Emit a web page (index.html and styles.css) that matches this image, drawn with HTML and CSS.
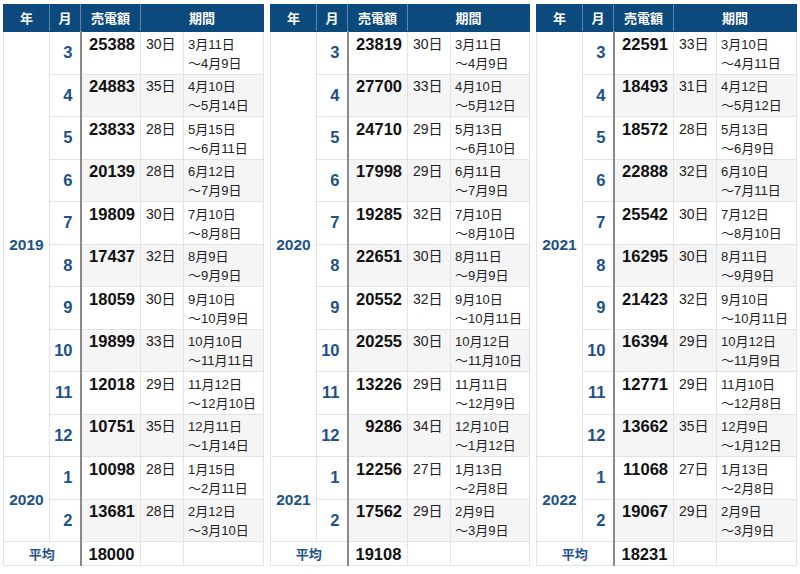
FILE: index.html
```html
<!DOCTYPE html>
<html lang="ja">
<head>
<meta charset="utf-8">
<link rel="stylesheet" href="styles.css">
</head>
<body>
<div class="wrap">
<table class="t t1">
<colgroup><col class="c-y"><col class="c-m"><col class="c-a"><col class="c-d"><col></colgroup>
<thead><tr><th>年</th><th>月</th><th>売電額</th><th colspan="2">期間</th></tr></thead>
<tbody>
<tr><td class="y" rowspan="10">2019</td><td class="m">3</td><td class="a">25388</td><td class="d">30日</td><td class="p">3月11日<br>〜4月9日</td></tr>
<tr class="g"><td class="m">4</td><td class="a">24883</td><td class="d">35日</td><td class="p">4月10日<br>〜5月14日</td></tr>
<tr><td class="m">5</td><td class="a">23833</td><td class="d">28日</td><td class="p">5月15日<br>〜6月11日</td></tr>
<tr class="g"><td class="m">6</td><td class="a">20139</td><td class="d">28日</td><td class="p">6月12日<br>〜7月9日</td></tr>
<tr><td class="m">7</td><td class="a">19809</td><td class="d">30日</td><td class="p">7月10日<br>〜8月8日</td></tr>
<tr class="g"><td class="m">8</td><td class="a">17437</td><td class="d">32日</td><td class="p">8月9日<br>〜9月9日</td></tr>
<tr><td class="m">9</td><td class="a">18059</td><td class="d">30日</td><td class="p">9月10日<br>〜10月9日</td></tr>
<tr class="g"><td class="m">10</td><td class="a">19899</td><td class="d">33日</td><td class="p">10月10日<br>〜11月11日</td></tr>
<tr><td class="m">11</td><td class="a">12018</td><td class="d">29日</td><td class="p">11月12日<br>〜12月10日</td></tr>
<tr class="g"><td class="m">12</td><td class="a">10751</td><td class="d">35日</td><td class="p">12月11日<br>〜1月14日</td></tr>
<tr><td class="y" rowspan="2">2020</td><td class="m">1</td><td class="a">10098</td><td class="d">28日</td><td class="p">1月15日<br>〜2月11日</td></tr>
<tr class="g"><td class="m">2</td><td class="a">13681</td><td class="d">28日</td><td class="p">2月12日<br>〜3月10日</td></tr>
<tr class="avg"><td class="avl" colspan="2">平均</td><td class="a">18000</td><td></td><td></td></tr>
</tbody>
</table>

<table class="t t2">
<colgroup><col class="c-y"><col class="c-m"><col class="c-a"><col class="c-d"><col></colgroup>
<thead><tr><th>年</th><th>月</th><th>売電額</th><th colspan="2">期間</th></tr></thead>
<tbody>
<tr><td class="y" rowspan="10">2020</td><td class="m">3</td><td class="a">23819</td><td class="d">30日</td><td class="p">3月11日<br>〜4月9日</td></tr>
<tr class="g"><td class="m">4</td><td class="a">27700</td><td class="d">33日</td><td class="p">4月10日<br>〜5月12日</td></tr>
<tr><td class="m">5</td><td class="a">24710</td><td class="d">29日</td><td class="p">5月13日<br>〜6月10日</td></tr>
<tr class="g"><td class="m">6</td><td class="a">17998</td><td class="d">29日</td><td class="p">6月11日<br>〜7月9日</td></tr>
<tr><td class="m">7</td><td class="a">19285</td><td class="d">32日</td><td class="p">7月10日<br>〜8月10日</td></tr>
<tr class="g"><td class="m">8</td><td class="a">22651</td><td class="d">30日</td><td class="p">8月11日<br>〜9月9日</td></tr>
<tr><td class="m">9</td><td class="a">20552</td><td class="d">32日</td><td class="p">9月10日<br>〜10月11日</td></tr>
<tr class="g"><td class="m">10</td><td class="a">20255</td><td class="d">30日</td><td class="p">10月12日<br>〜11月10日</td></tr>
<tr><td class="m">11</td><td class="a">13226</td><td class="d">29日</td><td class="p">11月11日<br>〜12月9日</td></tr>
<tr class="g"><td class="m">12</td><td class="a">9286</td><td class="d">34日</td><td class="p">12月10日<br>〜1月12日</td></tr>
<tr><td class="y" rowspan="2">2021</td><td class="m">1</td><td class="a">12256</td><td class="d">27日</td><td class="p">1月13日<br>〜2月8日</td></tr>
<tr class="g"><td class="m">2</td><td class="a">17562</td><td class="d">29日</td><td class="p">2月9日<br>〜3月9日</td></tr>
<tr class="avg"><td class="avl" colspan="2">平均</td><td class="a">19108</td><td></td><td></td></tr>
</tbody>
</table>

<table class="t t3">
<colgroup><col class="c-y"><col class="c-m"><col class="c-a"><col class="c-d"><col></colgroup>
<thead><tr><th>年</th><th>月</th><th>売電額</th><th colspan="2">期間</th></tr></thead>
<tbody>
<tr><td class="y" rowspan="10">2021</td><td class="m">3</td><td class="a">22591</td><td class="d">33日</td><td class="p">3月10日<br>〜4月11日</td></tr>
<tr class="g"><td class="m">4</td><td class="a">18493</td><td class="d">31日</td><td class="p">4月12日<br>〜5月12日</td></tr>
<tr><td class="m">5</td><td class="a">18572</td><td class="d">28日</td><td class="p">5月13日<br>〜6月9日</td></tr>
<tr class="g"><td class="m">6</td><td class="a">22888</td><td class="d">32日</td><td class="p">6月10日<br>〜7月11日</td></tr>
<tr><td class="m">7</td><td class="a">25542</td><td class="d">30日</td><td class="p">7月12日<br>〜8月10日</td></tr>
<tr class="g"><td class="m">8</td><td class="a">16295</td><td class="d">30日</td><td class="p">8月11日<br>〜9月9日</td></tr>
<tr><td class="m">9</td><td class="a">21423</td><td class="d">32日</td><td class="p">9月10日<br>〜10月11日</td></tr>
<tr class="g"><td class="m">10</td><td class="a">16394</td><td class="d">29日</td><td class="p">10月12日<br>〜11月9日</td></tr>
<tr><td class="m">11</td><td class="a">12771</td><td class="d">29日</td><td class="p">11月10日<br>〜12月8日</td></tr>
<tr class="g"><td class="m">12</td><td class="a">13662</td><td class="d">35日</td><td class="p">12月9日<br>〜1月12日</td></tr>
<tr><td class="y" rowspan="2">2022</td><td class="m">1</td><td class="a">11068</td><td class="d">27日</td><td class="p">1月13日<br>〜2月8日</td></tr>
<tr class="g"><td class="m">2</td><td class="a">19067</td><td class="d">29日</td><td class="p">2月9日<br>〜3月9日</td></tr>
<tr class="avg"><td class="avl" colspan="2">平均</td><td class="a">18231</td><td></td><td></td></tr>
</tbody>
</table>
</div>
</body>
</html>
```
FILE: styles.css
```css
html, body {
  margin: 0;
  padding: 0;
  background: #ffffff;
}
body {
  padding: 4px 3px;
  font-family: "Liberation Sans", "Noto Sans CJK JP", sans-serif;
  color: #111;
}
.wrap {
  display: flex;
  gap: 6px;
  align-items: flex-start;
}
.t {
  border-collapse: collapse;
  table-layout: fixed;
  width: 261px;
  border: 1px solid #dedede;
}
.t2 { width: 260px; }
.c-y { width: 46px; }
.c-m { width: 31px; }
.c-a { width: 60px; }
.c-d { width: 43px; }
th {
  background: #0c4a7e;
  color: #fff;
  font-family: "Noto Sans CJK JP", sans-serif;
  font-weight: 700;
  font-size: 13px;
  height: 26px;
  padding: 0;
  line-height: 26px;
  border: 1px solid #0c4a7e;
  border-right: 1px solid #5f86aa;
  text-align: center;
}
th:last-child { border-right: 1px solid #0c4a7e; }
td {
  border: 1px solid #e3e3e3;
  padding: 2.5px 6px 1px;
  line-height: 19px;
  vertical-align: top;
  font-size: 14px;
  background: #fff;
}
tr.g td { background: #f5f5f5; }
tr.g td.m, td.y { background: #fff; }
td.y {
  vertical-align: middle;
  text-align: center;
  color: #1c5189;
  font-weight: 700;
  font-size: 15.5px;
  padding: 0;
}
td.m {
  vertical-align: middle;
  text-align: right;
  color: #1c5189;
  font-weight: 700;
  font-size: 16.5px;
  padding: 0 7px 0 0;
  border-right: 2px solid #8a8a8a;
}
td.a {
  text-align: right;
  font-weight: 700;
  font-size: 16.5px;
  padding-right: 5px;
  color: #111;
}
td.d {
  font-size: 14px;
  padding-left: 5px;
  padding-right: 0;
  color: #222;
}
td.p {
  font-size: 13px;
  padding-left: 4px;
  padding-right: 0;
  color: #222;
  white-space: nowrap;
}
tr.avg td {
  height: 23px;
  padding-top: 0;
  padding-bottom: 0;
  vertical-align: middle;
  line-height: 22px;
}
td.avl {
  text-align: center;
  color: #1c5189;
  font-weight: 700;
  font-size: 13px;
  font-family: "Noto Sans CJK JP", sans-serif;
  border-right: 2px solid #8a8a8a;
}
tr.avg td.a { text-align: left; padding-left: 7px; }
```
